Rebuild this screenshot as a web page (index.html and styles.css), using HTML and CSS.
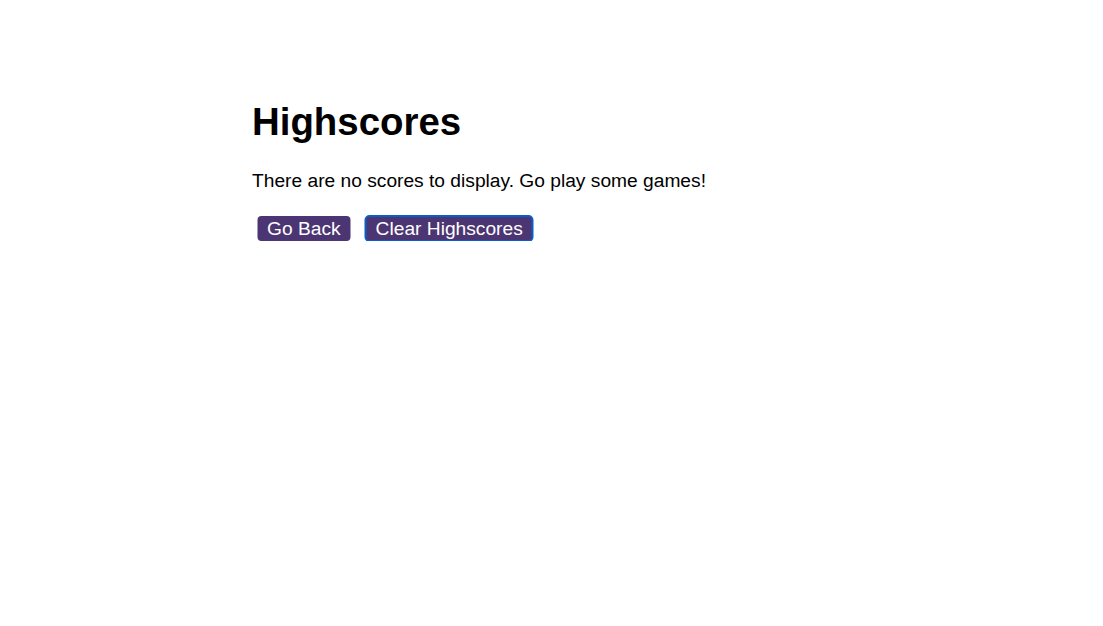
FILE: index.html
```html
<!DOCTYPE html>
<html lang="en">
<head>
<meta charset="utf-8">
<title>Highscores</title>
<link rel="stylesheet" href="styles.css">
</head>
<body>
<main class="page">
  <h1 class="title">Highscores</h1>
  <p class="message">There are no scores to display. Go play some games!</p>
  <div class="actions">
    <button class="btn" type="button">Go Back</button>
    <button class="btn btn-focused" type="button">Clear Highscores</button>
  </div>
</main>
</body>
</html>
```

FILE: styles.css
```css
html, body {
  margin: 0;
  padding: 0;
  background: #ffffff;
}

body {
  font-family: "Liberation Sans", Arial, Helvetica, sans-serif;
  font-size: 19.2px;
  color: #000000;
}

.page {
  width: 600px;
  margin: 0 auto;
  padding-top: 101px;
  box-sizing: border-box;
  transform: translateX(0.5px);
}

.title {
  margin: 0;
  font-size: 38.4px;
  font-weight: bold;
  line-height: 42px;
}

.message {
  margin: 27px 0 0;
  font-size: 19.2px;
  line-height: 22px;
}

.actions {
  display: flex;
  gap: 15px;
  margin: 24px 0 0 5px;
}

.btn {
  font-family: "Liberation Sans", Arial, Helvetica, sans-serif;
  font-size: 19.2px;
  line-height: 22px;
  color: #ffffff;
  background: #4b3673;
  border: none;
  border-radius: 4px;
  padding: 0 10px;
  height: 25px;
  cursor: pointer;
}

.btn-focused {
  outline: 2px solid #0b5ec6;
  outline-offset: -1px;
  border-radius: 4px;
}
```
